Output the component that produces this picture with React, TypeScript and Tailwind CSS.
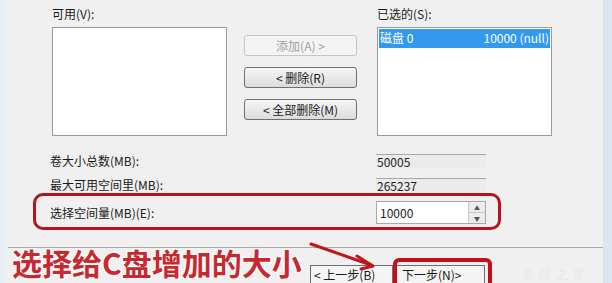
import React from 'react';

const cjk = { fontFamily: '"Noto Sans CJK SC", "Noto Sans", sans-serif' };

const DialogButton: React.FC<{ label: string; disabled?: boolean }> = ({ label, disabled }) => (
  <div
    className={`h-[21px] w-[113px] rounded-[3px] border flex items-center justify-center text-[12px] leading-none ${
      disabled
        ? 'border-[#c4c4c4] bg-[#f4f4f4] text-[#a0a0a0]'
        : 'border-[#707070] bg-gradient-to-b from-[#f6f6f6] to-[#dcdcdc] text-[#1a1a1a]'
    }`}
  >
    {label}
  </div>
);

const ReadField: React.FC<{ value: string }> = ({ value }) => (
  <div className="w-[110px] h-[14px] border-t border-[#a8a8a8] bg-[#ebebeb] text-[12px] leading-[13px] pl-[1px] text-[#222]">
    {value}
  </div>
);

export default function App() {
  return (
    <div className="relative w-[612px] h-[283px] overflow-hidden bg-[#f0f0f0] text-[#1a1a1a]" style={cjk}>
      {/* window edges */}
      <div className="absolute left-0 top-0 h-full w-[8px] bg-gradient-to-r from-[#e6edf4] to-[#f0f0f0]" />
      <div className="absolute right-0 top-0 h-full w-[9px] bg-[#dbe5f1]" />

      {/* lists */}
      <div className="flex pl-[52px] pt-[7px]">
        <div className="w-[175px]">
          <div className="h-[20px] text-[12px] leading-[14px]">可用(V):</div>
          <div className="h-[109px] border border-[#9a9a9a] bg-white" />
        </div>
        <div className="ml-[17px] pt-[28px] flex flex-col gap-[11px]">
          <DialogButton label="添加(A) >" disabled />
          <DialogButton label="< 删除(R)" />
          <DialogButton label="< 全部删除(M)" />
        </div>
        <div className="ml-[20px] w-[175px]">
          <div className="h-[20px] text-[12px] leading-[14px]">已选的(S):</div>
          <div className="h-[109px] border border-[#9a9a9a] bg-white p-[1px]">
            <div className="h-[19px] bg-[#3399ee] text-white text-[12px] leading-[18px] flex pl-[1px] pr-[1px]" style={{ fontFamily: '"Noto Sans CJK SC", "Liberation Mono", monospace' }}>
              <span>磁盘 0</span>
              <span className="ml-auto">10000 (null)</span>
            </div>
          </div>
        </div>
      </div>

      {/* sizes */}
      <div className="pl-[50px] pr-[126px] pt-[18px] flex flex-col">
        <div className="flex items-center justify-between h-[14px]">
          <span className="text-[12px]">卷大小总数(MB):</span>
          <ReadField value="50005" />
        </div>
        <div className="flex items-center justify-between h-[14px] mt-[10px]">
          <span className="text-[12px]">最大可用空间里(MB):</span>
          <ReadField value="265237" />
        </div>
        <div className="flex items-center justify-between h-[23px] mt-[9px]">
          <span className="text-[12px]">选择空间量(MB)(E):</span>
          <div className="w-[110px] h-[23px] border border-[#a8a8a8] bg-white flex items-center">
            <span className="pl-[3px] text-[12px] flex-1">10000</span>
            <div className="w-[17px] h-full border-l border-[#c8c8c8] flex flex-col">
              <div className="flex-1 flex items-center justify-center bg-[#ececec] border-b border-[#c8c8c8] text-[6px] text-[#555]">▲</div>
              <div className="flex-1 flex items-center justify-center bg-[#ececec] text-[6px] text-[#555]">▼</div>
            </div>
          </div>
        </div>
      </div>

      {/* separator */}
      <div className="mt-[23px] w-[603px] h-[2px] border-t border-[#a8a8a8] border-b-white" />

      {/* bottom buttons */}
      <div className="flex pl-[310px] pt-[16px]">
        <div className="w-[83px] h-[22px] border border-[#707070] bg-[#f4f4f4] text-[12px] leading-[18px] pl-[3px]">&lt; 上一步(B)</div>
        <div className="w-[92px] h-[22px] border border-[#707070] bg-[#f4f4f4] text-[12px] leading-[18px] pl-[8px]">下一步(N)&gt;</div>
      </div>

      {/* annotations */}
      <div className="absolute left-[33px] top-[193px] w-[468px] h-[37px] rounded-[10px] border-[3px] border-[#b0161c]" />
      <div className="absolute left-[393px] top-[258px] w-[99px] h-[34px] rounded-[6px] border-[4px] border-[#c0101a]" />
      <div
        className="absolute left-[12px] top-[243px] text-[30px] leading-[38px] font-bold text-[#c42a30]"
        style={{ textShadow: '0 0 2px #fff, 1px 1px 0 #fff, -1px -1px 0 #fff, 1px -1px 0 #fff, -1px 1px 0 #fff' }}
      >
        选择给C盘增加的大小
      </div>
      <svg className="absolute left-[305px] top-[239px]" width="80" height="34" viewBox="0 0 80 34">
        <line x1="6" y1="5" x2="66" y2="26" stroke="#c0151c" strokeWidth="3" strokeLinecap="round" />
        <polyline points="52,17 68,27 56,30" fill="none" stroke="#c0151c" strokeWidth="3" strokeLinecap="round" strokeLinejoin="round" />
      </svg>
      <div className="absolute left-[522px] top-[266px] text-[12px] leading-[15px] text-[#e2e8f0] tracking-[5px]">系统之家</div>
    </div>
  );
}
